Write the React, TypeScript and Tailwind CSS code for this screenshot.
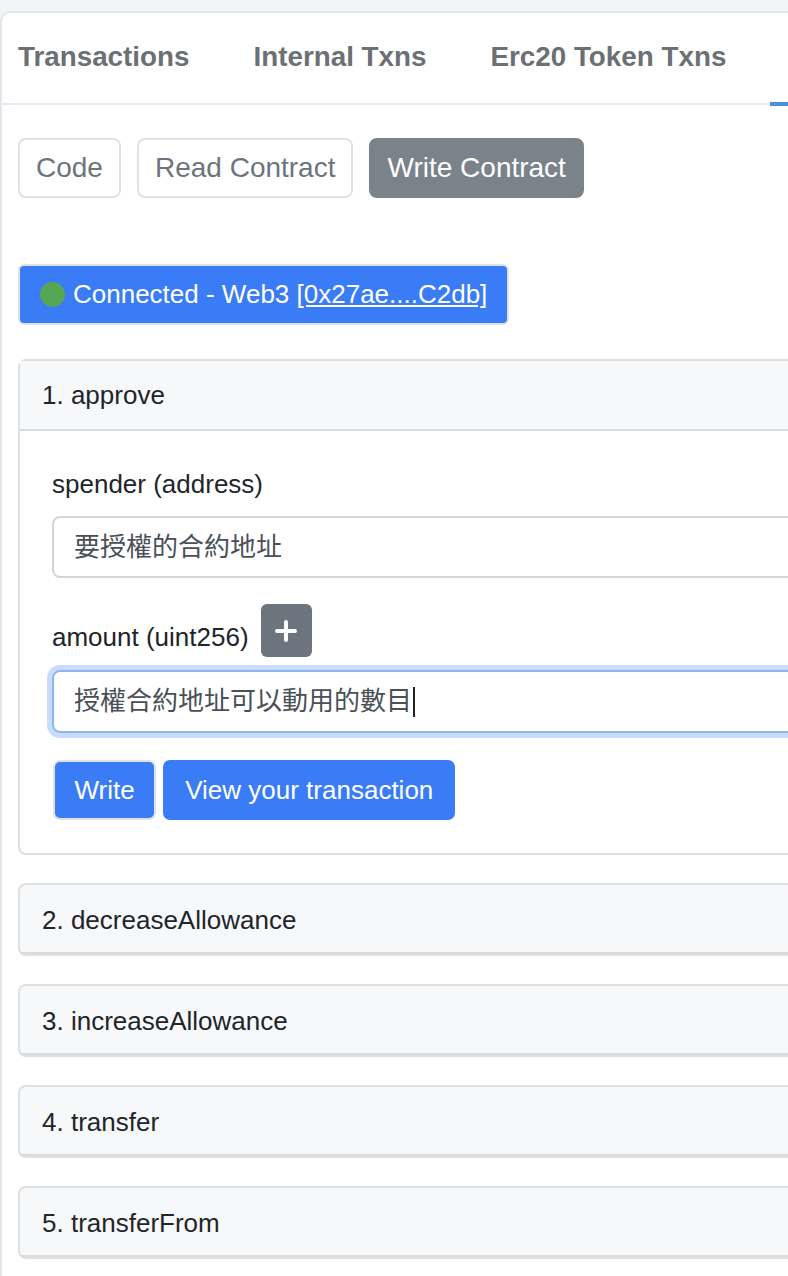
import React from "react";

const font = { fontFamily: '"Liberation Sans", Arial, "Noto Sans CJK TC", sans-serif' };

function CollapsedCard({ title }: { title: string }) {
  return (
    <div className="mr-[-40px] rounded-l-[8px] border-2 border-[#dfe0e2] bg-[#f7f8fa]">
      <div className="flex h-[69px] items-center border-b-2 border-[#dadbdd] pl-[22px] pt-[4px] text-[26px] text-[#212529]">
        {title}
      </div>
    </div>
  );
}

export default function App() {
  return (
    <div style={font} className="h-[1276px] w-[788px] overflow-hidden bg-[#f3f4f6] pt-[11px]">
      <div className="mr-[-20px] h-full rounded-tl-[10px] border-l-2 border-t-2 border-[#e3e6ea] bg-white">
        {/* Tabs */}
        <div className="relative flex h-[92px] items-center gap-[64px] border-b-2 border-[#e6eaf2] pb-[3px] pl-[16px] text-[27.8px] font-bold text-[#6b7075]">
          <span>Transactions</span>
          <span>Internal Txns</span>
          <span>Erc20 Token Txns</span>
          <div className="absolute bottom-[-3px] left-[768px] h-[4px] w-[60px] bg-[#4a8fdb]" />
        </div>

        <div className="pl-[16px]">
          {/* Sub buttons */}
          <div className="mt-[33px] flex gap-[16px]">
            <div className="flex h-[60px] items-center rounded-[8px] border-2 border-[#dee2e6] px-[16px] text-[28px] text-[#6c757d]">
              Code
            </div>
            <div className="flex h-[60px] items-center rounded-[8px] border-2 border-[#dee2e6] px-[16px] text-[28px] text-[#6c757d]">
              Read Contract
            </div>
            <div className="flex h-[60px] items-center rounded-[8px] border-2 border-[#7a828a] bg-[#7a828a] px-[16px] text-[28px] text-white">
              Write Contract
            </div>
          </div>

          {/* Connected */}
          <div className="mt-[66px] flex">
            <div className="flex h-[61px] items-center rounded-[6px] border-2 border-[#dfe3e8] bg-[#3a7cf5] pl-[20px] pr-[20px] text-[26px] text-white">
              <span className="mr-[8px] inline-block h-[25px] w-[25px] shrink-0 rounded-full bg-[#56a653]" />
              <span>
                Connected - Web3 <span className="underline">[0x27ae....C2db]</span>
              </span>
            </div>
          </div>

          {/* Cards */}
          <div className="mt-[34px] flex flex-col gap-[28px]">
            <div className="mr-[-40px] rounded-l-[8px] border-2 border-[#dfe0e2]">
              <div className="flex h-[70px] items-center border-b-2 border-[#dadbdd] bg-[#f7f8fa] pl-[22px] text-[26px] text-[#212529]">
                1. approve
              </div>
              <div className="pb-[33px] pl-[32px] pt-[34px]">
                <div className="text-[26px] leading-[39px] text-[#212529]">spender (address)</div>
                <div className="mt-[12px] flex h-[62px] items-center rounded-[8px] border-2 border-[#d3d6d9] pl-[20px] text-[26px] text-[#495057]">
                  要授權的合約地址
                </div>
                <div className="mt-[26px] flex items-end gap-[12px]">
                  <span className="text-[26px] leading-[39px] text-[#212529]">amount (uint256)</span>
                  <div className="flex h-[53px] w-[51px] items-center justify-center rounded-[6px] bg-[#6c757d]">
                    <svg width="22" height="22" viewBox="0 0 22 22">
                      <path d="M11 2v18M2 11h18" stroke="white" strokeWidth="4" strokeLinecap="round" />
                    </svg>
                  </div>
                </div>
                <div className="mt-[13px] flex h-[63px] items-center rounded-[8px] border-2 border-[#8ab6f8] pl-[20px] text-[26px] text-[#495057] shadow-[0_0_0_5px_#c9dcfb]">
                  授權合約地址可以動用的數目
                  <span className="ml-[1px] inline-block h-[30px] w-[2px] bg-[#222]" />
                </div>
                <div className="mt-[27px] flex gap-[7px]">
                  <div className="ml-[1px] flex h-[60px] items-center rounded-[7px] border-2 border-[#dfe3e8] bg-[#3a7cf5] px-[19.5px] text-[26px] text-white">
                    Write
                  </div>
                  <div className="flex h-[60px] items-center rounded-[7px] bg-[#3a7cf5] px-[22px] text-[26px] text-white">
                    View your transaction
                  </div>
                </div>
              </div>
            </div>
            <CollapsedCard title="2. decreaseAllowance" />
            <CollapsedCard title="3. increaseAllowance" />
            <CollapsedCard title="4. transfer" />
            <CollapsedCard title="5. transferFrom" />
          </div>
        </div>
      </div>
    </div>
  );
}
